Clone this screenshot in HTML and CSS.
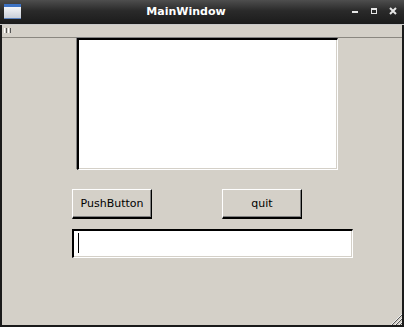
FILE: index.html
```html
<!DOCTYPE html>
<html>
<head>
    <title>MainWindow</title>
    <link rel="stylesheet" href="styles.css">
</head>
<body>
    <div class="window">
        <div class="titlebar">
            <div class="app-icon"></div>
            <div class="title">MainWindow</div>
            <div class="controls">
                <svg width="8" height="8" viewBox="0 0 8 8"><rect x="1" y="4" width="6" height="2" fill="#e6e6e6"/></svg>
                <svg width="8" height="8" viewBox="0 0 8 8"><rect x="1.5" y="1.5" width="5" height="5" fill="none" stroke="#e6e6e6"/><rect x="1" y="1" width="6" height="2" fill="#e6e6e6"/></svg>
                <svg width="8" height="8" viewBox="0 0 8 8"><path d="M1 1 L7 7 M7 1 L1 7" stroke="#e6e6e6" stroke-width="2"/></svg>
            </div>
        </div>
        <div class="toolbar">
            <span class="grip"></span>
            <span class="grip"></span>
        </div>
        <div class="central">
            <div class="textedit"></div>
            <div class="buttons">
                <button class="btn">PushButton</button>
                <button class="btn">quit</button>
            </div>
            <div class="lineedit"><span class="caret"></span></div>
        </div>
        <div class="sizegrip">
            <svg width="12" height="12" viewBox="0 0 12 12">
                <path d="M12 1 L1 12 M12 5 L5 12 M12 9 L9 12" stroke="#f0f0f0" stroke-width="1"/>
                <path d="M12 2 L2 12 M12 6 L6 12 M12 10 L10 12" stroke="#555" stroke-width="1"/>
            </svg>
        </div>
    </div>
</body>
</html>
```

FILE: styles.css
```css
body {
    margin: 0;
    font-family: "DejaVu Sans", sans-serif;
}
.window {
    width: 404px;
    height: 327px;
    box-sizing: border-box;
    background: #d4d0c8;
    border: 2px solid #1a1a1a;
    border-top: none;
    display: flex;
    flex-direction: column;
    position: relative;
}
.titlebar {
    height: 25px;
    margin: 0 -2px;
    background: linear-gradient(#4e4e4e 0%, #2a2a2a 45%, #1b1b1b 100%);
    display: flex;
    align-items: center;
    border-bottom: 1px solid #c8c8c8;
    box-sizing: border-box;
}
.app-icon {
    width: 17px;
    height: 15px;
    margin-left: 4px;
    margin-top: -2px;
    box-sizing: border-box;
    border-top: 3px solid #3d72c4;
    border-bottom: 1px solid #5b82c0;
    background: linear-gradient(#f4f5f8, #c9ced8);
}
.title {
    flex: 1;
    text-align: center;
    color: #ffffff;
    font-weight: bold;
    font-size: 11px;
    margin-top: -1px;
}
.controls {
    display: flex;
    gap: 11px;
    margin-right: 7px;
    margin-top: -2px;
}
.controls svg {
    display: block;
}
.toolbar {
    height: 13px;
    box-sizing: border-box;
    border-bottom: 1px solid #8a8780;
    display: flex;
    gap: 1px;
    padding: 3px 0 0 2px;
}
.grip {
    width: 1px;
    height: 5px;
    border-left: 1px solid #ffffff;
    border-right: 1px solid #555;
}
.central {
    flex: 1;
    padding-left: 70px;
}
.textedit {
    width: 261px;
    height: 132px;
    margin-left: 5px;
    box-sizing: border-box;
    background: #ffffff;
    border-top: 2px solid #000;
    border-left: 2px solid #000;
    border-right: 1px solid #ffffff;
    border-bottom: 1px solid #ffffff;
    box-shadow: -1px -1px 0 #808080, inset -1px -1px 0 #d4d0c8;
}
.buttons {
    display: flex;
    gap: 70px;
    margin-top: 19px;
}
.btn {
    width: 80px;
    height: 30px;
    background: #d4d0c8;
    border-top: 1px solid #ffffff;
    border-left: 1px solid #ffffff;
    border-right: 1px solid #000;
    border-bottom: 2px solid #000;
    box-shadow: inset -1px -1px 0 #808080;
    font-family: "DejaVu Sans", sans-serif;
    font-size: 11px;
    color: #000;
    padding: 0;
}
.lineedit {
    width: 281px;
    height: 29px;
    margin-top: 10px;
    box-sizing: border-box;
    background: #ffffff;
    border-top: 2px solid #000;
    border-left: 2px solid #000;
    border-right: 1px solid #ffffff;
    border-bottom: 1px solid #ffffff;
    box-shadow: inset -1px -1px 0 #d4d0c8;
    padding: 2px 0 0 4px;
}
.caret {
    display: block;
    width: 1px;
    height: 20px;
    background: #000;
}
.sizegrip {
    position: absolute;
    right: 0;
    bottom: 0;
    line-height: 0;
}
```
